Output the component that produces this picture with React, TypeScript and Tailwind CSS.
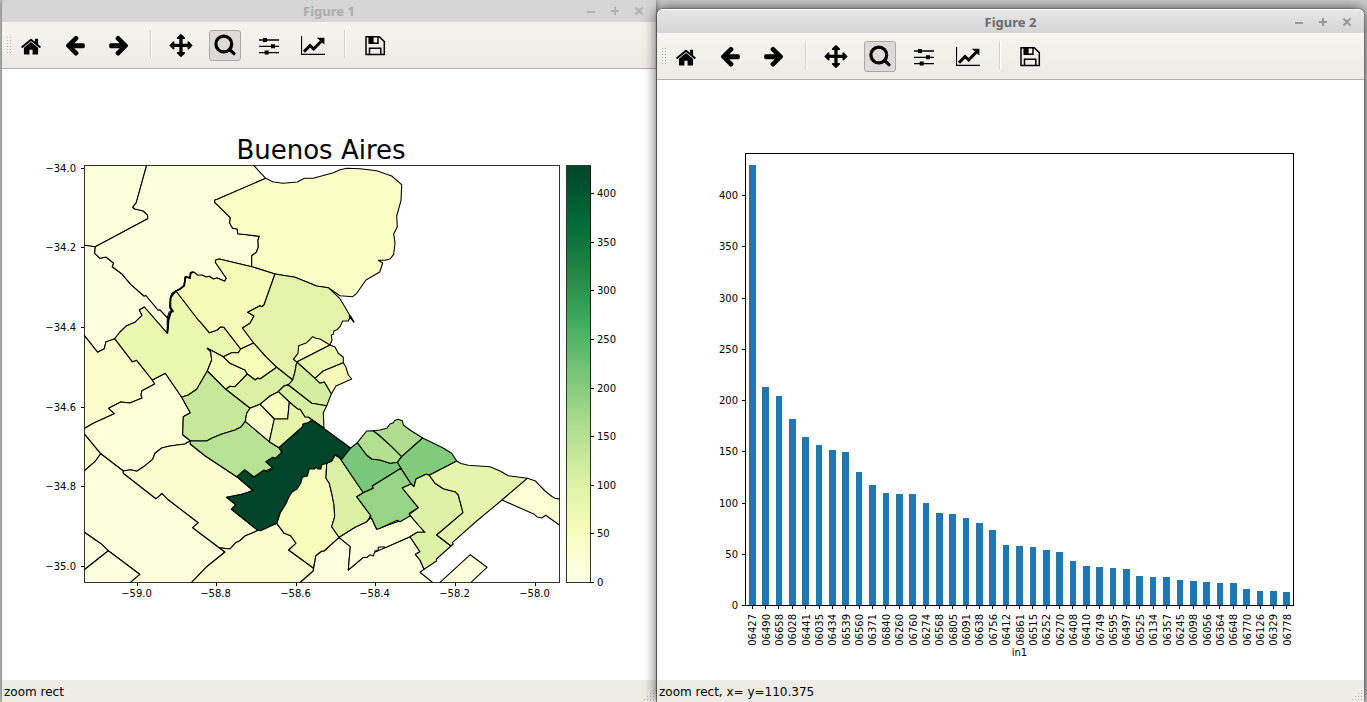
import React from "react";

type Region = { value: number; points: string };

const YLGN: [number, number, number][] = [
  [255, 255, 229],
  [247, 252, 185],
  [217, 240, 163],
  [173, 221, 142],
  [120, 198, 121],
  [65, 171, 93],
  [35, 132, 67],
  [0, 104, 55],
  [0, 69, 41],
];

const MAX_VALUE = 429;

function ylgn(value: number): string {
  const t = Math.min(Math.max(value / MAX_VALUE, 0), 1) * (YLGN.length - 1);
  const i = Math.min(Math.floor(t), YLGN.length - 2);
  const c = YLGN[i].map((v, k) => Math.round(v + (YLGN[i + 1][k] - v) * (t - i)));
  return `rgb(${c[0]},${c[1]},${c[2]})`;
}

const REGIONS: Region[] = [
  { value: 14, points: "80,160 148,160 146.7,165 136.3,202.7 132.7,207.3 135,209 143.3,211 147.7,215.3 147.7,218.7 95.3,246.7 84,245.3 80,245" },
  { value: 7, points: "80,245 84,245.3 95.3,246.7 94.7,253.3 100,258.3 106,257 113.7,263.3 112.3,266.7 122.3,274.3 130.7,284.3 144,296 146,295.5 158,310 160,309.8 167.3,317.7 167.3,333.3 144.3,307 139.3,310 142,315.3 135,322.3 126.7,325.7 120,332 116.7,336.7 114.7,338.7 109.3,340.7 106,341.7 104.3,348.7 97.7,352.3 84,335 80,330" },
  { value: 13, points: "146.7,160 146.7,165 136.3,202.7 132.7,207.3 135,209 143.3,211 147.7,215.3 147.7,218.7 95.3,246.7 94.7,253.3 100,258.3 106,257 113.7,263.3 112.3,266.7 122.3,274.3 130.7,284.3 144,296 146,295.5 158,310 160,309.8 167.3,317.7 169.3,311.7 173,311.3 170,308.3 170.3,298.3 171.7,294.3 176,291 180,289.3 184,285.7 185.3,276.7 190,278.3 191,272.3 194.3,272.3 197.3,275 202.7,275.3 206,277 209.3,276.3 213.3,279 217.3,278 224.7,281.3 226.3,278.3 215.3,262.3 216,259.7 219.3,259 251.7,266.7 251.7,255.7 256.3,252.3 258.3,247.3 258,240 259.3,236.3 246.7,234.7 237.7,233.7 237.3,229 232.7,228.3 229.7,223.3 230.3,217.7 214.7,202.3 215,199.7 217.3,199.3 265.7,178.3 253.3,165 250,160" },
  { value: 42, points: "265.7,178.3 273.3,182 283.3,183.3 297.3,182 304.3,178.3 313.3,178.3 333.3,172.7 340,169.7 346.7,168.3 360,168.7 376.7,170.7 391.7,176 401.7,184.7 401,200.7 396.7,216 397.3,226.7 393.7,234 395,243.3 393.7,254.3 390,259 385,260.3 378.3,260.3 382.7,263 379.7,272 366,280 356.7,293.3 352.7,296.7 340,295.7 328.3,287.7 316.7,286 295,277.3 275,274 251.7,266.7 251.7,255.7 256.3,252.3 258.3,247.3 258,240 259.3,236.3 246.7,234.7 237.7,233.7 237.3,229 232.7,228.3 229.7,223.3 230.3,217.7 214.7,202.3 215,199.7 217.3,199.3" },
  { value: 35, points: "80,330 84,335 97.7,352.3 104.3,348.7 106,341.7 109.3,340.7 114.7,338.7 132.3,361.7 136.7,360.3 152.3,380 154.7,384 142,390.7 141,395 142,398 130,403 120.7,402 108.7,408.3 114.3,413.7 93.3,423.3 84,428.7 80,431" },
  { value: 35, points: "80,428 84,433.3 100.7,453.7 95,461.7 84,471 80,474" },
  { value: 20, points: "80,431 84,428.7 93.3,423.3 114.3,413.7 108.7,408.3 120.7,402 130,403 142,398 141,395 142,390.7 154.7,384 152.3,380 165.3,373.3 181.7,397.3 190.3,412.7 183.3,416.7 182.7,434.7 190.3,440.7 185,444 170,446 161.7,448 155,453.3 152.7,459.3 145,465.7 136.7,471.3 130.7,469.7 123.3,471 100.7,453.7 84,433.3 80,428" },
  { value: 14, points: "80,474 84,471 95,461.7 100.7,453.7 123.3,471 123.3,473.3 156,498.7 162,493.3 167.3,499 198.3,522.7 192.7,527.7 219.3,547.7 225,552 206.7,566.7 191.7,582.3 188,590 125,590 130.3,582.3 139.7,574.3 108.3,550.7 101.7,544.3 84,532 80,530" },
  { value: 8, points: "80,530 84,532 101.7,544.3 108.3,550.7 84,570 80,573" },
  { value: 8, points: "80,573 84,570 108.3,550.7 139.7,574.3 130.3,582.3 122,590 80,590" },
  { value: 27, points: "123.3,471 130.7,469.7 136.7,471.3 145,465.7 152.7,459.3 155,453.3 161.7,448 170,446 185,444 190.3,440.7 190.3,444 205,455.7 236.7,476.7 253,490.7 241.7,494.3 226.7,497.3 236,505 231.7,509.3 258.3,530.3 245,536 240,540.7 235.7,542.7 230,549 219.3,547.7 192.7,527.7 198.3,522.7 167.3,499 162,493.3 156,498.7 123.3,473.3" },
  { value: 27, points: "219.3,547.7 230,549 235.7,542.7 240,540.7 245,536 258.3,530.3 276.7,523.3 284.3,533.3 290.7,535.7 296,543.3 288.7,550 313.3,568 313.3,571 300.7,582 294,590 184,590 191.7,582.3 206.7,566.7 225,552" },
  { value: 12, points: "313.3,571 315.7,555.7 321.7,551 324,551 339,537.3 350.3,546.7 348.3,570 363.3,557.3 385,547.7 410,536.7 420,551.7 415.3,554.3 420,560 424,569.3 420,572.3 432.3,582.3 440,590 292,590 300.7,582" },
  { value: 17, points: "339,537.3 355,527.3 366.7,521.7 371,517.3 376.7,529.3 397.3,521.7 409.3,514.3 418.3,525 425,532.3 417.3,532.3 410,536.7 385,547.7 384,546.7 378.3,547.3 378.3,550 375,551 373.3,556 370,554.7 367,557.5 363.3,557.3 348.3,570 350.3,546.7" },
  { value: 78, points: "114.7,338.7 120,332 126.7,325.7 135,322.3 142,315.3 139.3,310 144.3,307 167.3,333.3 168.3,326.7 168.3,318 171,311 170.3,298.3 176,291 198.3,320 200.7,322.3 209.3,332.7 217.3,330 220.7,326.7 224,327.3 240.7,349 238.3,352.7 231.7,352.7 223.3,356.7 207.3,348.3 210.7,351.7 211.7,360 207.3,371 196.7,389.3 188.3,395 181.7,397.3 165.3,373.3 152.3,380 136.7,360.3 132.3,361.7" },
  { value: 56, points: "176,291 180,289.3 184,285.7 185.3,276.7 190,278.3 191,272.3 194.3,272.3 197.3,275 202.7,275.3 206,277 209.3,276.3 213.3,279 217.3,278 224.7,281.3 226.3,278.3 215.3,262.3 216,259.7 219.3,259 251.7,266.7 275,274 264,305 262,306.7 260,305.7 247.7,312.3 254,316 250,323.3 242.5,328 253.7,343 240.7,349 224,327.3 220.7,326.7 217.3,330 209.3,332.7 200.7,322.3 198.3,320" },
  { value: 89, points: "275,274 295,277.3 316.7,286 328.3,287.7 340,298.7 346.7,310 353.7,322.3 350,317 348.3,321 342.7,321 340,326.7 336.7,330 334,330.7 333.3,334.3 331.3,335 332,340 330,345 296.7,362 295,371.7 292.7,380 276.7,367.3 265.7,356.7 253.7,343 242.5,328 250,323.3 254,316 247.7,312.3 260,305.7 262,306.7 264,305" },
  { value: 57, points: "207.3,348.3 223.3,356.7 230,363.3 245,370 247.3,374 240,381.7 235,386.7 230,386.3 225.7,389.3 207.3,371 211.7,360 210.7,351.7" },
  { value: 54, points: "223.3,356.7 231.7,352.7 238.3,352.7 240.7,349 253.7,343 265.7,356.7 276.7,367.3 260,379 257.7,378 255.3,380 247.3,374 245,370 230,363.3" },
  { value: 106, points: "247.3,374 255.3,380 257.7,378 260,379 276.7,367.3 292.7,380 289.3,384 284,386 278.3,391.7 270,396 260,404.3 250,408.3 225.7,389.3 230,386.3 235,386.7" },
  { value: 129, points: "207.3,371 225.7,389.3 250,408.3 246.7,413.3 245.3,421.3 241,427 235,430 222,434 212.7,437.7 206.7,441 190.3,440.7 182.7,434.7 183.3,416.7 190.3,412.7 181.7,397.3 188.3,395 196.7,389.3" },
  { value: 149, points: "190.3,440.7 206.7,441 212.7,437.7 222,434 235,430 241,427 245.3,421.3 269.3,441.7 279,447.7 281.7,452.3 272.3,467.7 254,477 236.7,476.7 205,455.7 190.3,444" },
  { value: 40, points: "298.7,345.7 306.7,342.7 312.7,336.7 316,338.3 320,339 330,345 296.7,362 293.3,359.3 298,353.3" },
  { value: 80, points: "296.7,362 330,345 335,347 338.3,353.3 343.3,357.3 343.3,362.7 323.3,371 315,378.3" },
  { value: 58, points: "343.3,362.7 345.7,366.7 348.3,375 351.7,379 336,386 331.3,394 324.3,382 320,383.3 315,378.3 323.3,371" },
  { value: 114, points: "296.7,362 315,378.3 320,383.3 324.3,382 331.3,394 326.7,405.7 311.7,403.3 288.3,385 292.7,380 295,371.7" },
  { value: 108, points: "288.3,385 311.7,403.3 326.7,405.7 323.3,412.7 324,428 312.3,420 308.3,417.3 305,417 300,409.3 298,409.3 289.3,402 278.3,391.7 284,386" },
  { value: 47, points: "278.3,391.7 289.3,402 287.7,419 274.3,419 260,404.3 270,396" },
  { value: 37, points: "260,404.3 274.3,419 269.3,441.7 245.3,421.3 246.7,413.3 250,408.3" },
  { value: 88, points: "274.3,419 287.7,419 289.3,402 298,409.3 300,409.3 305,417 308.3,417.3 312.3,420 302.7,426.7 279,447.7 269.3,441.7" },
  { value: 51, points: "276.7,523.3 280,513.3 290,490 310,465 326.7,463.3 326,478.3 329.3,483.3 331.7,493.3 334,505 334.7,516.7 331.7,526.7 339,537.3 324,551 321.7,551 315.7,555.7 315,560 313.3,568 288.7,550 296,543.3 290.7,535.7 284.3,533.3" },
  { value: 105, points: "326.7,463.3 331.7,461 335,455 340,458.3 363.3,492.7 356.7,496.7 371,516 366.7,521.7 355,527.3 339,537.3 331.7,526.7 334.7,516.7 334,505 331.7,493.3 329.3,483.3 326,478.3" },
  { value: 213, points: "350.7,448 357.3,442.7 366.7,455 371.7,459 380,460 390,463.3 397.7,462.3 401,468.3 391.7,474 372.3,486 373.3,488.3 363.3,492.7 340,458.3" },
  { value: 429, points: "312.3,420 350.7,448 341.7,459.3 340,457.3 335,455 331.7,461 326.7,463.3 321.7,465 321,469 318,469 316,467 314.7,469 309.3,468.7 307.3,476 302.3,477.3 300.7,483.3 296.7,489.3 292.3,491.7 289,496.7 285.7,504.3 280,513.3 276.7,523.3 260.7,530.7 257.3,530 231.3,509.3 235.7,504.7 226.7,497.3 240,494.7 246,493 252.7,490.3 236.7,476.7 244.7,469.7 254,477 264,470 267.7,472 272.3,467.7 265.7,461.7 272.7,457.3 275,458.3 281.7,452.3 279,447.7 302.7,426.7 302.7,424.3 305,423.3 308,422.7" },
  { value: 152, points: "357.3,442.7 366.7,431 373.3,430.7 380,436 391.7,446.7 401.7,456.7 397.3,462.3 390,463.3 380,460 371.7,459 366.7,455" },
  { value: 160, points: "373.3,430.7 380,430 386.7,428.3 390,424 393.3,422.7 394.7,420.5 398.3,419.3 402.3,420.7 403.3,425 410,430 422.7,438 401.7,456.7 391.7,446.7 380,436" },
  { value: 204, points: "422.7,438 442.7,447.7 451.7,453.3 456.7,461 429.3,475.3 426,474.3 416,479 414,486.7 411,484 397.3,462.3 401.7,456.7" },
  { value: 182, points: "372.3,486 391.7,474 400.7,468.3 411,484 402.3,488 418.3,507.7 409.3,513.3 410,516 400,521.7 397.3,520.3 380,528.3 376.7,529.3 371.7,518.3 369.3,517.3 371,516 356.7,496.7 363.3,492.7 373.3,488.3" },
  { value: 100, points: "414,486.7 416,479 426,474.3 429.3,475.3 435,483.3 443.3,488.7 455,491.7 458.3,495 463,512.7 436.7,535 451,546 436.5,559 436.5,561 424,569.3 420,560 415.3,554.3 420,551.7 410,536.7 417.3,532.3 425,532.3 418.3,525 409.3,514.3 418.3,507.7 402.3,488 411,484" },
  { value: 84, points: "429.3,475.3 456.7,461 461,463.5 468.3,465.3 490,466.7 500,471 508.3,475.7 527.3,478.3 502,500 476.7,521 452.3,542.7 453.3,544 451,546 436.7,535 463,512.7 458.3,495 455,491.7 443.3,488.7 435,483.3" },
  { value: 22, points: "527.3,478.3 535,480.7 545,491 552,496.5 555,498.3 565,500 565,529 545.7,515.3 541.7,518 536.7,516.7 534.3,514.3 502,500" },
  { value: 14, points: "430,591 440,582.3 470.3,554.7 487,567.3 471,582.3 462,590" },
];

const RIVER =
  "167.3,333.3 168.5,320 171,312 173,311.3 170,307 170.7,298 172,294 176,291 180,289 184.3,285.5 185.3,278 186,276.7 190,278 190.5,273 193.7,272";

const LON_TICKS = [
  { x: 137.5, label: "−59.0" },
  { x: 216.5, label: "−58.8" },
  { x: 296.5, label: "−58.6" },
  { x: 375.5, label: "−58.4" },
  { x: 455.5, label: "−58.2" },
  { x: 535.5, label: "−58.0" },
];

const LAT_TICKS = [
  { y: 168.5, label: "−34.0" },
  { y: 247.5, label: "−34.2" },
  { y: 327.5, label: "−34.4" },
  { y: 407.5, label: "−34.6" },
  { y: 486.5, label: "−34.8" },
  { y: 566.5, label: "−35.0" },
];

const BARS: [string, number][] = [
  ["06427", 429], ["06490", 213], ["06658", 204], ["06028", 181.500], ["06441", 164], ["06035", 156],
  ["06434", 151], ["06539", 149], ["06560", 130], ["06371", 117], ["06840", 109], ["06260", 108],
  ["06760", 108], ["06274", 100], ["06568", 90], ["06805", 89], ["06091", 85], ["06638", 80],
  ["06756", 73], ["06412", 59], ["06861", 58], ["06515", 57], ["06252", 54], ["06270", 52],
  ["06408", 43], ["06410", 38], ["06749", 37], ["06595", 36], ["06497", 35], ["06525", 28],
  ["06134", 27], ["06357", 27], ["06245", 24], ["06098", 23], ["06056", 22], ["06364", 21],
  ["06648", 21], ["06770", 16], ["06126", 14], ["06329", 14], ["06778", 13],
];

const CHART_FONT = "font-['DejaVu_Sans',sans-serif] text-[10px]";

function MapFigure() {
  return (
    <svg viewBox="2 69 654 611" className={`block h-full w-full ${CHART_FONT}`} role="img" aria-label="Buenos Aires">
      <defs>
        <clipPath id="map-axes">
          <rect x="84.5" y="165.5" width="475" height="417" />
        </clipPath>
        <linearGradient id="ylgn-scale" x1="0" y1="1" x2="0" y2="0">
          {YLGN.map((c, i) => (
            <stop key={i} offset={i / 8} stopColor={`rgb(${c[0]},${c[1]},${c[2]})`} />
          ))}
        </linearGradient>
      </defs>
      <text x="321" y="159" textAnchor="middle" className="text-[26px]">
        Buenos Aires
      </text>
      <g clipPath="url(#map-axes)" stroke="#000" strokeWidth="1.1" strokeLinejoin="round">
        {REGIONS.map((r, i) => (
          <polygon key={i} points={r.points} fill={ylgn(r.value)} />
        ))}
        <polyline points={RIVER} fill="none" strokeWidth="1.8" />
        <path d="M349 316L354 322L350.500 316Z" />
      </g>
      <g stroke="#000" strokeWidth="1" fill="none" shapeRendering="crispEdges">
        <rect x="84.5" y="165.5" width="475" height="417" strokeWidth="0.8" />
        {LON_TICKS.map((t) => (
          <path key={t.label} d={`M${t.x} 583V586`} />
        ))}
        {LAT_TICKS.map((t) => (
          <path key={t.label} d={`M81 ${t.y}H84`} />
        ))}
        <rect x="566.5" y="165.5" width="24" height="417" fill="url(#ylgn-scale)" strokeWidth="0.8" />
      </g>
      {LON_TICKS.map((t) => (
        <text key={t.label} x={t.x - 1} y="597" textAnchor="middle">
          {t.label}
        </text>
      ))}
      {LAT_TICKS.map((t) => (
        <text key={t.label} x="76" y={t.y + 3.5} textAnchor="end">
          {t.label}
        </text>
      ))}
      {[0, 50, 100, 150, 200, 250, 300, 350, 400].map((v) => {
        const y = Math.round(582 - v * 0.972);
        return (
          <g key={v}>
            <path d={`M591 ${y + 0.5}H594`} stroke="#000" />
            <text x="597" y={y + 4}>
              {v}
            </text>
          </g>
        );
      })}
    </svg>
  );
}

function BarFigure() {
  const step = 548 / BARS.length;
  const base = 605;
  return (
    <svg viewBox="657 80 707 600" className={`block h-full w-full ${CHART_FONT}`} role="img" aria-label="in1">
      {BARS.map(([id, v], i) => {
        const x = 745.5 + step * (i + 0.5);
        const left = Math.round(x - step / 4);
        const right = Math.round(x + step / 4);
        const h = Math.round(v * 1.025);
        return (
          <g key={id}>
            <rect x={left} y={base - h} width={right - left} height={h} fill="#1f77b4" />
            <path d={`M${Math.floor(x) + 0.5} 606V609`} stroke="#000" />
            <text transform={`translate(${Math.round(x) + 4} 614) rotate(-90)`} textAnchor="end">
              {id}
            </text>
          </g>
        );
      })}
      <rect x="745.5" y="153.5" width="548" height="452" fill="none" stroke="#000" strokeWidth="1" />
      {[0, 50, 100, 150, 200, 250, 300, 350, 400].map((v) => {
        const y = Math.round(base - v * 1.025);
        return (
          <g key={v}>
            <path d={`M742 ${y + 0.5}H745`} stroke="#000" />
            <text x="738" y={y + 4} textAnchor="end">
              {v}
            </text>
          </g>
        );
      })}
      <text x="1019.5" y="656" textAnchor="middle">
        in1
      </text>
    </svg>
  );
}

const ARROW =
  "M1664 896v128q0 53-32.500 90.500t-84.500 37.500h-704l293 294q38 36 38 90t-38 90l-75 76q-37 37-90 37-52 0-91-37l-651-652q-37-37-37-90 0-52 37-91l651-650q38-38 91-38 52 0 90 38l75 74q38 38 38 91t-38 91l-293 293h704q52 0 84.500 37.500t32.500 90.500z";

const ICONS: Record<string, React.ReactNode> = {
  Home: (
    <g transform="translate(1 1.700) scale(0.01228)">
      <path d="M1472 992v480q0 26-19 45t-45 19h-384v-384h-256v384h-384q-26 0-45-19t-19-45v-480q0-1 .5-3t.5-3l575-474 575 474q1 2 1 6zm223-69l-62 74q-8 9-21 11h-3q-13 0-21-7l-692-577-692 577q-12 8-24 7-13-2-21-11l-62-74q-8-10-7-23.500t11-21.500l719-599q32-26 76-26t76 26l244 204v-195q0-14 9-23t23-9h192q14 0 23 9t9 23v408l219 182q10 8 11 21.500t-7 23.500z" />
    </g>
  ),
  Back: (
    <g transform="translate(0.5 -0.6) scale(0.0128)">
      <path d={ARROW} />
    </g>
  ),
  Forward: (
    <g transform="translate(23.500 -0.6) scale(-0.0128 0.0128)">
      <path d={ARROW} />
    </g>
  ),
  Pan: (
    <g transform="translate(0.5 0) scale(0.0128)">
      <path d="M1792 896q0 26-19 45l-256 256q-19 19-45 19t-45-19-19-45v-128h-384v384h128q26 0 45 19t19 45-19 45l-256 256q-19 19-45 19t-45-19l-256-256q-19-19-19-45t19-45 45-19h128v-384h-384v128q0 26-19 45t-45 19-45-19l-256-256q-19-19-19-45t19-45l256-256q19-19 45-19t45 19 19 45v128h384v-384h-128q-26 0-45-19t-19-45 19-45l256-256q19-19 45-19t45 19l256 256q19 19 19 45t-19 45-45 19h-128v384h384v-128q0-26 19-45t45-19 45 19l256 256q19 19 19 45z" />
    </g>
  ),
  Zoom: (
    <g fill="none" stroke="#000" strokeWidth="3.200" strokeLinecap="round">
      <circle cx="10.800" cy="10" r="7.900" />
      <path d="M16.500 15.500L21 19.700" />
    </g>
  ),
  Subplots: (
    <g>
      <path d="M2 6H22M2 12.300H22M2 18.600H22" stroke="#000" strokeWidth="1.300" />
      <path d="M6 4h4v4H6zM14 10.300h4v4h-4zM7.700 16.600h4v4h-4z" />
    </g>
  ),
  Edit: (
    <g fill="none" stroke="#000">
      <path d="M0.500 2V20.400H24" strokeWidth="1.200" />
      <path d="M3 17.700L9 11.500L12.700 15L20.500 7" strokeWidth="3" />
      <path d="M15.800 3.700H23.400V10.600Z" fill="#000" stroke="none" />
    </g>
  ),
  Save: (
    <g fill="none" stroke="#000" strokeWidth="1.500">
      <path d="M3 2.700H16.300L21.300 7.600V20.600H3Z" strokeLinejoin="round" />
      <path d="M6.200 2.700V9.200H15V2.700M6.500 20.600V14.300H17.800V20.600" />
      <path d="M6.200 2.700H10.600V9.200H6.200Z" fill="#000" stroke="none" />
    </g>
  ),
};

function ToolButton({ name, active = false }: { name: string; active?: boolean }) {
  return (
    <button
      type="button"
      aria-label={name}
      aria-pressed={active}
      className={
        active
          ? "flex h-[31px] w-8 shrink-0 justify-center rounded-[3px] border border-[#aaa7a4] bg-[#dedad7] pt-[3px]"
          : "flex h-[31px] w-8 shrink-0 justify-center rounded-[3px] border border-transparent pt-[3px]"
      }
    >
      <svg viewBox="0 0 24 24" className="h-6 w-6 shrink-0" fill="#000">
        {ICONS[name]}
      </svg>
    </button>
  );
}

function Separator() {
  return (
    <div className="flex h-7 w-1.5 shrink-0 justify-end pr-px">
      <div className="w-0.5 border-r border-l border-r-white border-l-[#d3cfcb]" />
    </div>
  );
}

function Toolbar() {
  return (
    <div className="flex h-[47px] shrink-0 items-start border-b border-[#b4afaa] bg-linear-to-b from-[#f7f4ef] to-[#eeebe7] pt-2 pl-[5px]">
      <svg viewBox="0 0 4 17" className="mt-[7px] mr-1 h-[17px] w-1 shrink-0" fill="#b8b3ae">
        {[0, 3, 6, 9, 12, 15].map((y) => (
          <path key={y} d={`M0 ${y}h1v1H0zM3 ${y}h1v1H3z`} />
        ))}
      </svg>
      <div className="flex items-start gap-3">
        <ToolButton name="Home" />
        <ToolButton name="Back" />
        <ToolButton name="Forward" />
        <Separator />
        <ToolButton name="Pan" />
        <ToolButton name="Zoom" active />
        <ToolButton name="Subplots" />
        <ToolButton name="Edit" />
        <Separator />
        <ToolButton name="Save" />
      </div>
    </div>
  );
}

const CONTROLS = [
  { name: "Minimize", d: "M8 12H16" },
  { name: "Maximize", d: "M8 11H16M12 7V15" },
  { name: "Close", d: "M8.500 7.500L15.500 14.500M15.500 7.500L8.500 14.500" },
];

function TitleBar({ title, focused }: { title: string; focused: boolean }) {
  return (
    <div
      className={
        focused
          ? "grid h-6 shrink-0 grid-cols-[1fr_auto_1fr] items-center rounded-t-md border-t border-white bg-linear-to-b from-[#e6e6e6] to-[#d5d5d5] px-[5px] text-[#6a6a6a]"
          : "grid h-[22px] shrink-0 grid-cols-[1fr_auto_1fr] items-center rounded-tl-md bg-[#d6d6d6] px-[5px] text-[#acacac]"
      }
    >
      <span />
      <h1 className="font-['Noto_Sans',sans-serif] text-[13px] leading-5 font-bold">{title}</h1>
      <div className="flex justify-end">
        {CONTROLS.map((c) => (
          <button key={c.name} type="button" aria-label={c.name} className="h-[22px] w-6">
            <svg
              viewBox="0 0 24 22"
              className={focused ? "h-[22px] w-6 text-[#999]" : "h-[22px] w-6 text-[#b2b2b2]"}
              fill="none"
              stroke="currentColor"
              strokeWidth="2"
            >
              <path d={c.d} />
            </svg>
          </button>
        ))}
      </div>
    </div>
  );
}

function StatusBar({ text }: { text: string }) {
  return (
    <div className="flex h-[22px] shrink-0 items-end justify-between bg-[#efebe7] pl-0.5 font-['DejaVu_Sans',sans-serif] text-[12px]">
      <p className="pt-0.5 leading-5 whitespace-pre">{text}</p>
      <svg viewBox="0 0 12 12" className="h-3 w-3" fill="#b8b3ae">
        <path d="M9 0h1v1H9zM6 3h1v1H6zM9 3h1v1H9zM3 6h1v1H3zM6 6h1v1H6zM9 6h1v1H9zM0 9h1v1H0zM3 9h1v1H3zM6 9h1v1H6zM9 9h1v1H9z" />
      </svg>
    </div>
  );
}

export default function App() {
  return (
    <main className="flex h-screen gap-px overflow-hidden bg-[#cdcdcd] pr-[3px] pl-0.5 text-black">
      <section className="flex min-w-0 flex-[654] flex-col shadow-[0_0_6px_rgba(0,0,0,0.6)]">
        <TitleBar title="Figure 1" focused={false} />
        <Toolbar />
        <div className="min-h-0 flex-1 bg-white">
          <MapFigure />
        </div>
        <StatusBar text="zoom rect" />
      </section>
      <section className="z-10 mt-[9px] flex min-w-0 flex-[707] flex-col rounded-t-md shadow-[0_0_14px_rgba(0,0,0,0.7),0_0_2px_rgba(0,0,0,0.6)]">
        <TitleBar title="Figure 2" focused />
        <Toolbar />
        <div className="min-h-0 flex-1 bg-white">
          <BarFigure />
        </div>
        <StatusBar text="zoom rect, x= y=110.375" />
      </section>
    </main>
  );
}
